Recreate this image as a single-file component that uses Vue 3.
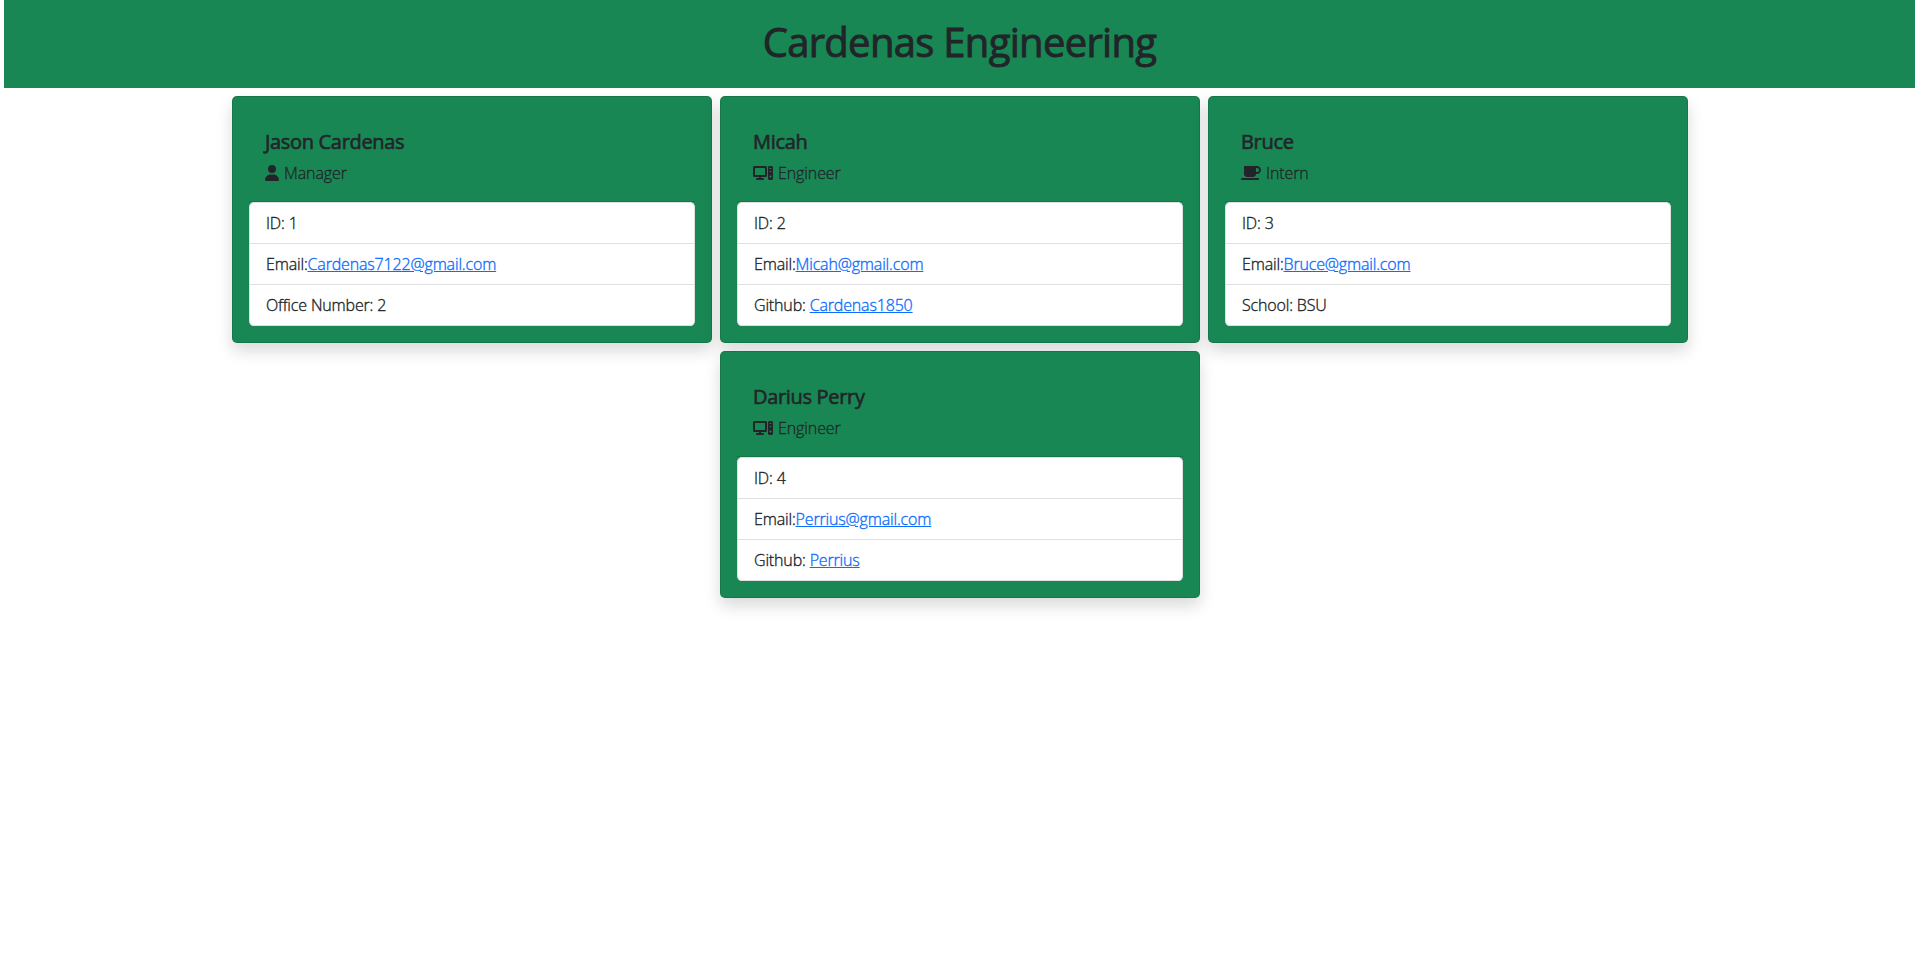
<script setup>
const icons = {
  user: {
    width: 14,
    box: '0 0 448 512',
    path: 'M224 256A128 128 0 1 0 224 0a128 128 0 1 0 0 256zm-45.7 48C79.8 304 0 383.8 0 482.3C0 498.7 13.3 512 29.7 512H418.3c16.4 0 29.7-13.3 29.7-29.7C448 383.8 368.2 304 269.7 304H178.3z',
  },
  computer: {
    width: 20,
    box: '0 0 640 512',
    path: 'M400 32H48C21.5 32 0 53.5 0 80v256c0 26.5 21.5 48 48 48h144v32h-64c-17.7 0-32 14.3-32 32s14.3 32 32 32h192c17.7 0 32-14.3 32-32s-14.3-32-32-32h-64v-32h144c26.5 0 48-21.5 48-48V80c0-26.5-21.5-48-48-48zM384 320H64V96h320v224zM592 32h-64c-26.5 0-48 21.5-48 48v352c0 26.5 21.5 48 48 48h64c26.5 0 48-21.5 48-48V80c0-26.5-21.5-48-48-48zM560 400c-17.7 0-32-14.3-32-32s14.3-32 32-32s32 14.3 32 32s-14.3 32-32 32zM592 208c0 8.8-7.2 16-16 16h-32c-8.8 0-16-7.2-16-16s7.2-16 16-16h32c8.8 0 16 7.2 16 16zM592 112c0 8.8-7.2 16-16 16h-32c-8.8 0-16-7.2-16-16s7.2-16 16-16h32c8.8 0 16 7.2 16 16z',
  },
  mug: {
    width: 20,
    box: '0 0 640 512',
    path: 'M512 32H120c-13.3 0-24 10.7-24 24v232c0 53 43 96 96 96h192c53 0 96-43 96-96h32c70.6 0 128-57.4 128-128S582.6 32 512 32zM512 224h-32V96h32c35.3 0 64 28.7 64 64s-28.7 64-64 64zM544 416H32c-17.7 0-32 14.3-32 32s14.3 32 32 32h512c17.7 0 32-14.3 32-32s-14.3-32-32-32z',
  },
}

const team = [
  { id: 1, name: 'Jason Cardenas', role: 'Manager', icon: 'user', email: 'Cardenas7122@gmail.com', label: 'Office Number: ', value: '2' },
  { id: 2, name: 'Micah', role: 'Engineer', icon: 'computer', email: 'Micah@gmail.com', label: 'Github: ', link: 'Cardenas1850' },
  { id: 3, name: 'Bruce', role: 'Intern', icon: 'mug', email: 'Bruce@gmail.com', label: 'School: ', value: 'BSU' },
  { id: 4, name: 'Darius Perry', role: 'Engineer', icon: 'computer', email: 'Perrius@gmail.com', label: 'Github: ', link: 'Perrius' },
]
</script>

<template>
  <div class="page">
    <header class="banner">
      <h1>Cardenas Engineering</h1>
    </header>
    <main class="team">
      <article v-for="m in team" :key="m.id" class="card">
        <div class="card-head">
          <h5>{{ m.name }}</h5>
          <p class="role">
            <svg :width="icons[m.icon].width" height="16" :viewBox="icons[m.icon].box" aria-hidden="true">
              <path :d="icons[m.icon].path" fill="currentColor" fill-rule="evenodd" />
            </svg>
            <span>{{ m.role }}</span>
          </p>
        </div>
        <ul class="details">
          <li>ID: {{ m.id }}</li>
          <li>Email:<a :href="'mailto:' + m.email">{{ m.email }}</a></li>
          <li>{{ m.label }}<a v-if="m.link" href="#">{{ m.link }}</a><template v-else>{{ m.value }}</template></li>
        </ul>
      </article>
    </main>
  </div>
</template>

<style>
body {
  margin: 0;
  background: #fff;
}
</style>

<style scoped>
.page {
  box-sizing: border-box;
  min-height: 100vh;
  padding-left: 4px;
  color: #212529;
  font-family: "Segoe UI", "Open Sans", "Noto Sans", sans-serif;
  font-size: 16px;
  line-height: 24px;
}
.banner {
  box-sizing: border-box;
  height: 88px;
  padding: 16px 0;
  background: #198754;
  text-align: center;
}
h1 {
  margin: 0;
  padding-top: 2px;
  font-size: 40px;
  font-weight: 400;
  line-height: 48px;
  letter-spacing: -0.7px;
  -webkit-text-stroke: 0.9px;
}
.team {
  display: flex;
  flex-wrap: wrap;
  justify-content: center;
  gap: 8px;
  width: 1456px;
  margin: 8px auto 0 228px;
}
.card {
  position: relative;
  box-sizing: border-box;
  width: 480px;
  padding: 16px;
  border: 1px solid rgba(0, 0, 0, 0.125);
  border-radius: 5px;
  background: #198754;
  box-shadow: 0 8px 16px rgba(0, 0, 0, 0.15);
}
.card-head {
  padding: 16px;
  border-bottom: 1px solid rgba(0, 0, 0, 0.125);
}
h5 {
  margin: 0;
  padding: 1px 0 7px;
  font-size: 20px;
  font-weight: 400;
  line-height: 24px;
  letter-spacing: -0.32px;
  -webkit-text-stroke: 0.6px;
}
.role {
  display: flex;
  align-items: center;
  gap: 5px;
  height: 24px;
  margin: 0;
  font-weight: 300;
  letter-spacing: -0.1px;
  -webkit-text-stroke: 0.3px;
}
.role svg {
  -webkit-text-stroke: 0;
}
.details {
  margin: 0;
  padding: 0;
  list-style: none;
  border: 1px solid #dfdfdf;
  border-bottom: 0;
  border-radius: 5px;
  background: #fff;
  font-weight: 300;
  letter-spacing: -0.16px;
  -webkit-text-stroke: 0.35px;
}
.details li {
  padding: 8px 16px;
  border-bottom: 1px solid #dfdfdf;
}
.details li:last-child {
  border-radius: 0 0 4px 4px;
}
a {
  color: #0d6efd;
  text-decoration: underline;
}
</style>
